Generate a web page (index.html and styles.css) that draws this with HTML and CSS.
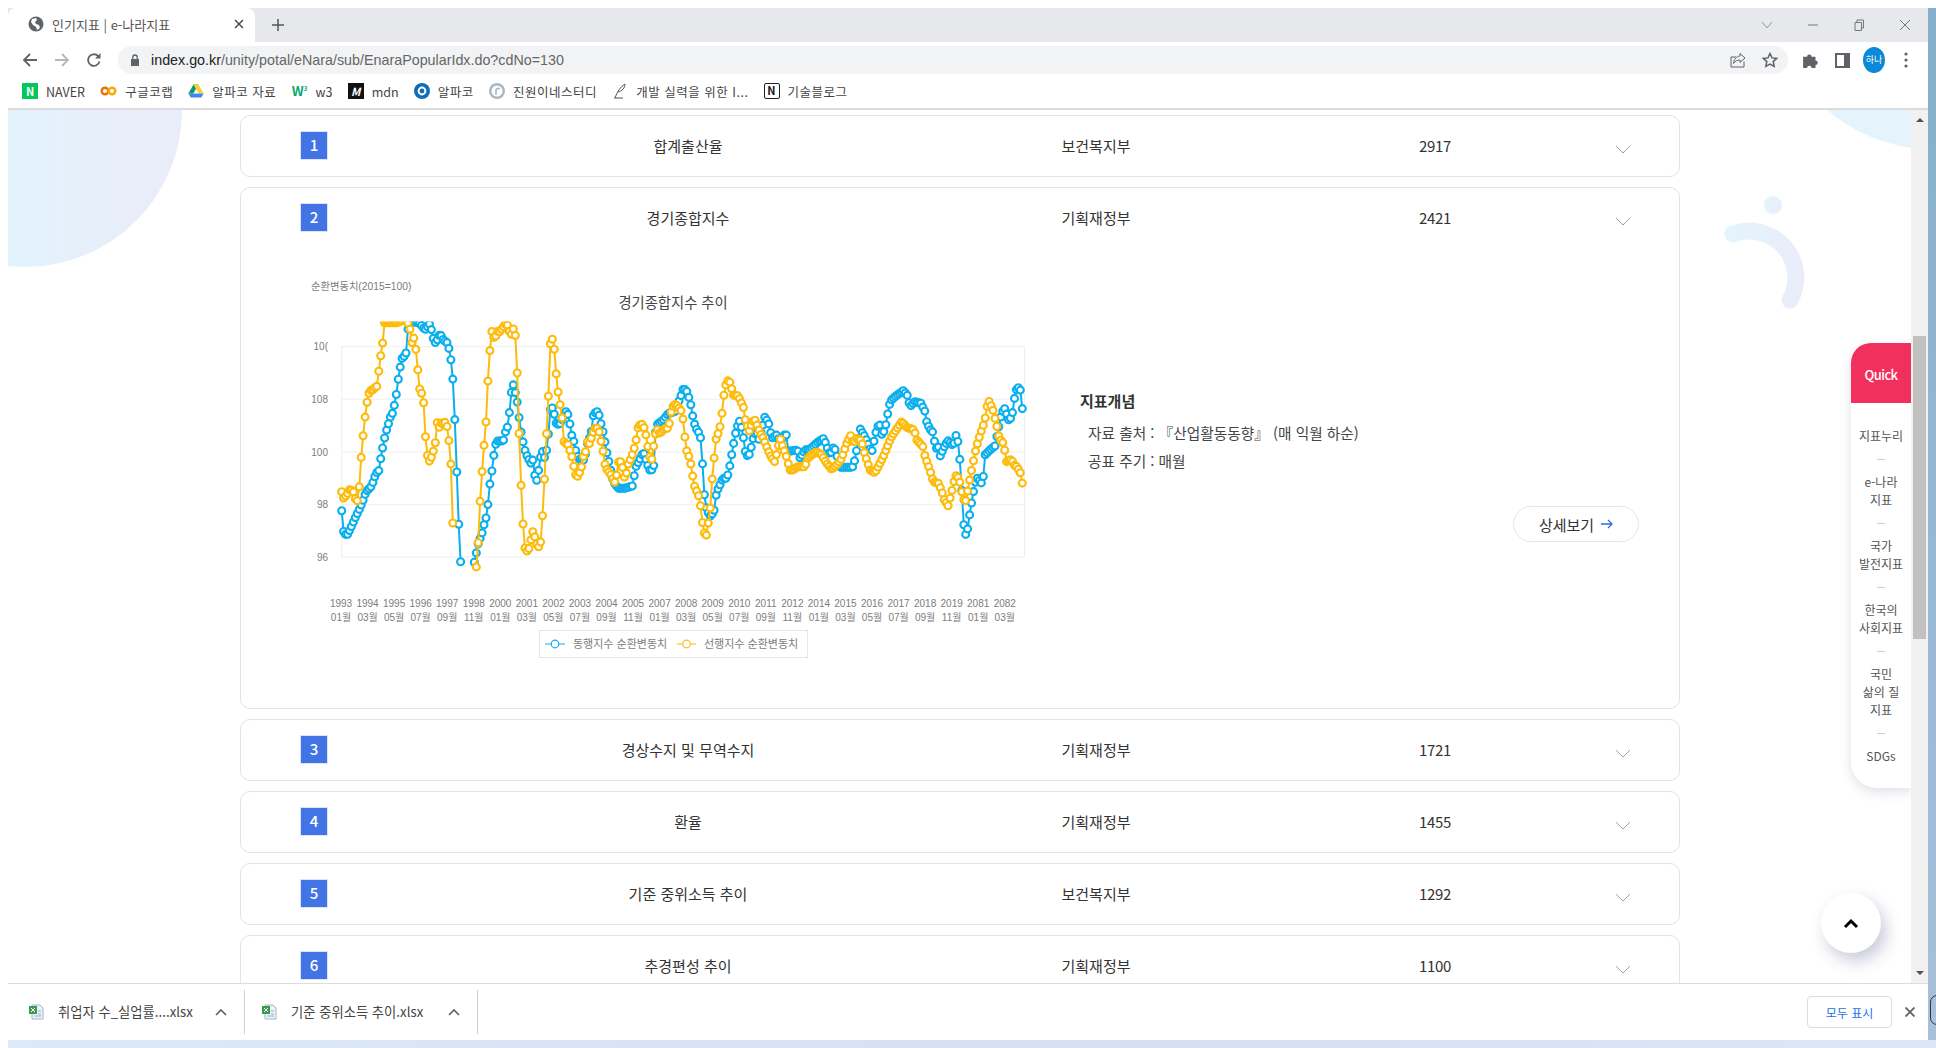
FILE: index.html
```html
<!DOCTYPE html>
<html lang="ko">
<head>
<meta charset="UTF-8">
<meta name="viewport" content="width=device-width, initial-scale=1.0">
<title>인기지표 | e-나라지표</title>
<link rel="stylesheet" href="styles.css">
</head>
<body>
<div class="desk-icon"></div>
<div class="window">
    <div class="tabstrip">
        <div class="tab">
            <svg class="tab-fav" width="16" height="16" viewBox="0 0 16 16"><circle cx="8" cy="8" r="7.5" fill="#5f6368"/><path d="M4 3l4-1 1 2-2 2 1 2 3 1 1 3-3 2-1-3-3-2-2-3z" fill="#fff"/></svg>
            <span class="tab-title">인기지표 | e-나라지표</span>
            <svg class="tab-close" width="10" height="10" viewBox="0 0 10 10"><path d="M1 1l8 8M9 1l-8 8" stroke="#444" stroke-width="1.4"/></svg>
        </div>
        <svg class="tab-plus" width="12" height="12" viewBox="0 0 12 12"><path d="M6 0v12M0 6h12" stroke="#555" stroke-width="1.5"/></svg>
        <div class="win-controls">
            <svg width="14" height="14" viewBox="0 0 14 14"><path d="M2 4l5 6 5-6" fill="none" stroke="#999"/></svg>
            <svg width="14" height="14" viewBox="0 0 14 14"><path d="M2 7h10" stroke="#777"/></svg>
            <svg width="14" height="14" viewBox="0 0 14 14"><path d="M3 4.5h6.5v8H3zM5 4.5V2h6.500v8H9.500" fill="none" stroke="#777"/></svg>
            <svg width="14" height="14" viewBox="0 0 14 14"><path d="M2 2l10 10M12 2L2 12" stroke="#777"/></svg>
        </div>
    </div>

    <div class="toolbar">
        <svg class="nav-icon" width="16" height="16" viewBox="0 0 16 16"><path d="M15 8H2M8 2L2 8l6 6" fill="none" stroke="#5f6368" stroke-width="1.800"/></svg>
        <svg class="nav-icon" width="16" height="16" viewBox="0 0 16 16"><path d="M1 8h13M8 2l6 6-6 6" fill="none" stroke="#b4b7bb" stroke-width="1.800"/></svg>
        <svg class="nav-icon" width="16" height="16" viewBox="0 0 16 16"><path d="M13.500 9.500A5.800 5.800 0 1 1 12 4" fill="none" stroke="#5f6368" stroke-width="1.800"/><path d="M14.500 1v5.500H9z" fill="#5f6368"/></svg>
        <div class="address">
            <svg class="lock" width="10" height="12" viewBox="0 0 10 12"><path d="M1 5h8v7H1z" fill="#5f6368"/><path d="M2.800 5V3.200a2.200 2.200 0 0 1 4.400 0V5" fill="none" stroke="#5f6368" stroke-width="1.300"/></svg>
            <span class="url"><b>index.go.kr</b>/unity/potal/eNara/sub/EnaraPopularIdx.do?cdNo=130</span>
            <svg class="addr-share" width="16" height="16" viewBox="0 0 16 16"><path d="M14 9.500V15H1V5h5" fill="none" stroke="#5f6368"/><path d="M10 1.500L15 6l-5 4.500V8C7 8 5 9 3.500 11.500 4 7 6.500 4.500 10 4z" fill="none" stroke="#5f6368"/></svg>
            <svg class="addr-star" width="16" height="16" viewBox="0 0 16 16"><path d="M8 1.500l2 4.400 4.800.5-3.600 3.200 1 4.700L8 12l-4.200 2.300 1-4.700L1.200 6.400 6 5.900z" fill="none" stroke="#5f6368" stroke-width="1.500"/></svg>
        </div>
        <svg class="ext-icon" width="18" height="18" viewBox="0 0 16 16"><path d="M1 5h3.500a2 2 0 1 1 4 0H12v3.500a2 2 0 1 1 0 4V15H8.500a2 2 0 1 0-4 0H1z" fill="#5f6368"/></svg>
        <svg class="panel-icon" width="15" height="15" viewBox="0 0 15 15"><rect width="15" height="15" fill="#5f6368"/><rect x="2" y="2" width="7" height="11" fill="#fff"/></svg>
        <div class="avatar">하나</div>
        <svg class="dots" width="4" height="16" viewBox="0 0 4 16"><circle cx="2" cy="2" r="1.600" fill="#5f6368"/><circle cx="2" cy="8" r="1.600" fill="#5f6368"/><circle cx="2" cy="14" r="1.600" fill="#5f6368"/></svg>
    </div>

    <div class="bookmarks">
        <div class="bm bm-en"><span class="bm-naver">N</span>NAVER</div>
        <div class="bm"><svg width="17" height="16" viewBox="0 0 17 16"><circle cx="5" cy="8" r="3.300" fill="none" stroke="#e8710a" stroke-width="2.400"/><circle cx="12" cy="8" r="3.300" fill="none" stroke="#f9ab00" stroke-width="2.400"/></svg>구글코랩</div>
        <div class="bm"><svg width="16" height="16" viewBox="0 0 16 16"><path d="M5.500 1.500h5L5.300 10.500H.3z" fill="#0f9d58"/><path d="M10.500 1.500l5.200 9h-5L5.500 1.500z" fill="#ffcd40"/><path d="M.3 10.500h15.400l-2.500 4H2.800z" fill="#4285f4"/></svg>알파코 자료</div>
        <div class="bm bm-en"><span class="bm-w3">W<sup>3</sup></span>w3</div>
        <div class="bm bm-en"><span class="bm-mdn">M</span>mdn</div>
        <div class="bm"><svg width="16" height="16" viewBox="0 0 16 16"><circle cx="8" cy="8" r="8" fill="#0f6db5"/><circle cx="8" cy="8" r="3.400" fill="none" stroke="#fff" stroke-width="2"/></svg>알파코</div>
        <div class="bm"><svg width="16" height="16" viewBox="0 0 16 16"><circle cx="8" cy="8" r="8" fill="#a9b7c4"/><circle cx="8" cy="8" r="5.500" fill="#fff"/><path d="M7 12V7.500A2 2 0 0 1 9 5.500h2" fill="none" stroke="#a9b7c4" stroke-width="1.600"/></svg>진원이네스터디</div>
        <div class="bm"><svg width="16" height="16" viewBox="0 0 16 16"><path d="M13 1C8 4 5 9 3 15M13 1c0 4-3 7-7 8M2 15h9" fill="none" stroke="#555"/></svg>개발 실력을 위한 I...</div>
        <div class="bm"><span class="bm-notion">N</span>기술블로그</div>
    </div>

    <div class="viewport">
        <div class="page">
            <div class="deco-left"></div>
            <div class="deco-right"></div>
            <svg class="deco-swirl" width="120" height="130" viewBox="1708 190 120 130">
                <defs>
                    <linearGradient id="swirl-grad" x1="0" y1="0" x2="1" y2="0">
                        <stop offset="0" stop-color="#e3f4fc"/>
                        <stop offset="1" stop-color="#e9edf9"/>
                    </linearGradient>
                </defs>
                <circle cx="1773" cy="205" r="9" fill="url(#swirl-grad)"/>
                <path d="M1733 234A46.500 46.500 0 0 1 1790 300" fill="none" stroke="url(#swirl-grad)" stroke-width="17" stroke-linecap="round"/>
            </svg>

            <div class="list">
                <div class="card">
                    <div class="row">
                        <span class="rank">1</span><span class="name">합계출산율</span><span class="dept">보건복지부</span><span class="count">2917</span>
                        <svg class="chev" width="16" height="9" viewBox="0 0 16 9"><path d="M1 1l7 7 7-7" fill="none" stroke="#a0a0a0"/></svg>
                    </div>
                </div>
                <div class="card">
                    <div class="row">
                        <span class="rank">2</span><span class="name">경기종합지수</span><span class="dept">기획재정부</span><span class="count">2421</span>
                        <svg class="chev" width="16" height="9" viewBox="0 0 16 9"><path d="M1 1l7 7 7-7" fill="none" stroke="#a0a0a0"/></svg>
                    </div>
                    <div class="detail">
                        <svg id="trend-chart" class="chart" width="740" height="400" viewBox="300 270 740 400"></svg>
                        <div class="concept">
                            <h3>지표개념</h3>
                            <p>자료 출처 : 『산업활동동향』 (매 익월 하순)</p>
                            <p>공표 주기 : 매월</p>
                            <a class="more">상세보기 <svg width="12" height="10" viewBox="0 0 12 10"><path d="M0 5h11M7 1l4 4-4 4" fill="none" stroke="#2f6fd8" stroke-width="1.300"/></svg></a>
                        </div>
                    </div>
                </div>
                <div class="card">
                    <div class="row">
                        <span class="rank">3</span><span class="name">경상수지 및 무역수지</span><span class="dept">기획재정부</span><span class="count">1721</span>
                        <svg class="chev" width="16" height="9" viewBox="0 0 16 9"><path d="M1 1l7 7 7-7" fill="none" stroke="#a0a0a0"/></svg>
                    </div>
                </div>
                <div class="card">
                    <div class="row">
                        <span class="rank">4</span><span class="name">환율</span><span class="dept">기획재정부</span><span class="count">1455</span>
                        <svg class="chev" width="16" height="9" viewBox="0 0 16 9"><path d="M1 1l7 7 7-7" fill="none" stroke="#a0a0a0"/></svg>
                    </div>
                </div>
                <div class="card">
                    <div class="row">
                        <span class="rank">5</span><span class="name">기준 중위소득 추이</span><span class="dept">보건복지부</span><span class="count">1292</span>
                        <svg class="chev" width="16" height="9" viewBox="0 0 16 9"><path d="M1 1l7 7 7-7" fill="none" stroke="#a0a0a0"/></svg>
                    </div>
                </div>
                <div class="card">
                    <div class="row">
                        <span class="rank">6</span><span class="name">추경편성 추이</span><span class="dept">기획재정부</span><span class="count">1100</span>
                        <svg class="chev" width="16" height="9" viewBox="0 0 16 9"><path d="M1 1l7 7 7-7" fill="none" stroke="#a0a0a0"/></svg>
                    </div>
                </div>
            </div>

            <div class="quick">
                <div class="quick-head">Quick</div>
                <ul class="quick-list">
                    <li>지표누리</li>
                    <li>e-나라<br>지표</li>
                    <li>국가<br>발전지표</li>
                    <li>한국의<br>사회지표</li>
                    <li>국민<br>삶의 질<br>지표</li>
                    <li>SDGs</li>
                </ul>
            </div>
            <div class="to-top"><svg width="16" height="11" viewBox="0 0 16 11"><path d="M2 9l6-6 6 6" fill="none" stroke="#000" stroke-width="3"/></svg></div>
        </div>
        <div class="scrollbar">
            <span class="arrow-up"></span>
            <span class="thumb"></span>
            <span class="arrow-down"></span>
        </div>
    </div>

    <div class="downloads">
        <div class="dl-item">
            <svg width="15" height="16" viewBox="0 0 15 16"><path d="M3 1h8l3 3v11H3z" fill="#eef3f9" stroke="#9fb4cc"/><rect x="0" y="2" width="8" height="8" fill="#3c9a4b"/><path d="M2 4l4 4M6 4L2 8" stroke="#fff"/><path d="M9 7h3M9 10h3M5 12h7" stroke="#8fb0d0"/></svg>
            <span class="dl-name">취업자 수_실업률....xlsx</span>
            <svg class="dl-caret" width="12" height="8" viewBox="0 0 12 8"><path d="M1 7l5-5 5 5" fill="none" stroke="#5f6368" stroke-width="1.700"/></svg>
        </div>
        <div class="dl-item">
            <svg width="15" height="16" viewBox="0 0 15 16"><path d="M3 1h8l3 3v11H3z" fill="#eef3f9" stroke="#9fb4cc"/><rect x="0" y="2" width="8" height="8" fill="#3c9a4b"/><path d="M2 4l4 4M6 4L2 8" stroke="#fff"/><path d="M9 7h3M9 10h3M5 12h7" stroke="#8fb0d0"/></svg>
            <span class="dl-name">기준 중위소득 추이.xlsx</span>
            <svg class="dl-caret" width="12" height="8" viewBox="0 0 12 8"><path d="M1 7l5-5 5 5" fill="none" stroke="#5f6368" stroke-width="1.700"/></svg>
        </div>
        <button class="show-all">모두 표시</button>
        <svg class="dl-close" width="10" height="10" viewBox="0 0 10 10"><path d="M0.500 0.500l9 9M9.500 0.500l-9 9" stroke="#5f6368" stroke-width="1.800"/></svg>
    </div>
</div>
<script src="chart.js"></script>
</body>
</html>
```

FILE: styles.css
```css
* {
    box-sizing: border-box;
}

html, body {
    margin: 0;
    padding: 0;
    height: 100%;
    overflow: hidden;
}

body {
    position: relative;
    padding: 8px 0 0 8px;
    background: #fff;
    font-family: "Noto Sans CJK KR", "Noto Sans", sans-serif;
    color: #333;
}

/* desktop wallpaper seen around the window */
body::before {
    content: "";
    position: absolute;
    right: 0;
    top: 8px;
    bottom: 8px;
    width: 8px;
    background: linear-gradient(#84aecb, #a9c0da);
}

body::after {
    content: "";
    position: absolute;
    left: 8px;
    right: 0;
    bottom: 0;
    height: 8px;
    background: linear-gradient(90deg, #dce9f7, #d5e0f4 60%, #dbe7f6);
}

.desk-icon {
    position: absolute;
    z-index: 1;
    left: 1930px;
    top: 995px;
    width: 16px;
    height: 30px;
    border: 1.5px solid #333;
    border-radius: 7px;
}

.window {
    display: flex;
    flex-direction: column;
    width: 1920px;
    height: 1032px;
    background: #fff;
}

.tabstrip {
    display: flex;
    align-items: center;
    flex: 0 0 34px;
    background: #e7e8ec;
}

.tab {
    display: flex;
    align-items: center;
    align-self: stretch;
    width: 247px;
    padding: 0 11px 2px 20px;
    background: #fff;
    border-radius: 8px 8px 0 0;
}

.tab-title {
    flex: 1;
    margin-left: 8px;
    font-size: 13px;
    color: #555;
}

.tab-plus {
    margin-left: 17px;
}

.win-controls {
    display: flex;
    gap: 32px;
    margin-left: auto;
    margin-right: 16px;
}

.toolbar {
    display: flex;
    align-items: center;
    flex: 0 0 32px;
    padding: 4px 0 0 14px;
}

.nav-icon {
    margin-right: 16px;
}

.address {
    display: flex;
    align-items: center;
    width: 1670px;
    height: 28px;
    padding: 0 10px 0 12px;
    background: #f1f3f4;
    border-radius: 14px;
}

.url {
    margin-left: 11px;
    font-family: "Liberation Sans", sans-serif;
    font-size: 14.300px;
    color: #666;
}

.url b {
    font-weight: normal;
    color: #222;
}

.addr-share {
    margin-left: auto;
}

.addr-star {
    margin-left: 16px;
}

.ext-icon {
    margin-left: 14px;
}

.panel-icon {
    margin-left: 15px;
}

.avatar {
    width: 22px;
    height: 26px;
    margin-left: 13px;
    border-radius: 50%;
    background: #0a8ad6;
    color: #fff;
    font-size: 9px;
    line-height: 26px;
    text-align: center;
}

.dots {
    margin-left: 19px;
}

.bookmarks {
    display: flex;
    align-items: center;
    gap: 15.200px;
    flex: 0 0 36px;
    padding-left: 14px;
    border-bottom: 2px solid #dcdcdc;
    font-size: 12.500px;
    letter-spacing: 0.5px;
    color: #444;
}

.bm {
    display: flex;
    align-items: center;
    gap: 8px;
    white-space: nowrap;
}

.bm-en {
    letter-spacing: 0;
}

.bm-naver, .bm-mdn, .bm-notion, .bm-w3 {
    display: block;
    width: 16px;
    height: 16px;
    font-size: 11px;
    font-weight: bold;
    line-height: 16px;
    text-align: center;
}

.bm-naver {
    background: #03c75a;
    color: #fff;
}

.bm-w3 {
    color: #04aa6d;
    font-size: 13px;
}

.bm-w3 sup {
    font-size: 6px;
    line-height: 0;
}

.bm-mdn {
    background: #111;
    color: #fff;
    font-style: italic;
}

.bm-notion {
    border: 1.500px solid #222;
    border-radius: 2px;
    color: #111;
    line-height: 13px;
}

.viewport {
    display: flex;
    flex: 1;
    min-height: 0;
}

.page {
    position: relative;
    flex: 1;
    overflow: hidden;
}

.deco-left {
    position: absolute;
    left: -140px;
    top: -157px;
    width: 314px;
    height: 314px;
    border-radius: 50%;
    background: linear-gradient(90deg, #e2f3fd 46%, #e9edf9 85%);
}

.deco-right {
    position: absolute;
    left: 1766px;
    top: -275px;
    width: 314px;
    height: 314px;
    border-radius: 50%;
    background: #e4f3fc;
}

.deco-swirl {
    position: absolute;
    left: 1700px;
    top: 80px;
}

.list {
    position: relative;
    display: flex;
    flex-direction: column;
    gap: 10px;
    width: 1440px;
    margin: 5px 0 0 232px;
}

.card {
    flex: none;
    border: 1px solid #e4e4e4;
    border-radius: 10px;
    background: #fff;
}

.row {
    display: flex;
    align-items: center;
    height: 60px;
    padding: 0 0 2px 59px;
    font-size: 15px;
    color: #333;
}

.rank {
    flex: none;
    width: 28px;
    height: 29px;
    background: #4374e6;
    border: 1px solid #dbe5fa;
    color: #fff;
    font-weight: 500;
    line-height: 26px;
    text-align: center;
}

.name {
    width: 720px;
    text-align: center;
}

.dept {
    width: 96px;
    text-align: center;
}

.count {
    width: 100px;
    margin-left: 241px;
    letter-spacing: -0.3px;
    text-align: center;
}

.chev {
    margin-left: 130px;
    margin-top: 9px;
}

.detail {
    display: flex;
    padding: 22px 40px 38px 59px;
}

.chart {
    flex: none;
}

.chart text {
    font-family: "Liberation Sans", "Noto Sans CJK KR", sans-serif;
    font-size: 10px;
    fill: #7c7c7c;
}

.chart .chart-unit {
    font-size: 10.300px;
}

.chart .chart-title {
    font-family: "Noto Sans CJK KR", sans-serif;
    font-size: 14.300px;
    fill: #444;
}

.chart .legend-text {
    font-size: 11px;
}

.concept {
    flex: 1;
    display: flex;
    flex-direction: column;
    margin: 119px 0 0 40px;
    font-size: 14.700px;
}

.concept h3 {
    margin: 0 0 9px;
    font-size: 15px;
    line-height: 24px;
    font-weight: bold;
}

.concept p {
    margin: 0 0 6px 8px;
    line-height: 22px;
    color: #444;
}

.more {
    display: flex;
    align-items: center;
    justify-content: center;
    gap: 7px;
    align-self: flex-end;
    width: 126px;
    height: 36px;
    margin-top: 28px;
    border: 1px solid #e6e6e6;
    border-radius: 18px;
    font-size: 15px;
}

.quick {
    position: absolute;
    top: 233px;
    right: 0;
    width: 60px;
    border-radius: 20px 0 0 26px;
    background: #fff;
    box-shadow: 0 4px 12px rgba(60, 70, 110, 0.16);
}

.quick-head {
    height: 60px;
    border-radius: 20px 0 0 0;
    background: #f2305e;
    color: #fff;
    font-size: 13px;
    font-weight: 500;
    letter-spacing: -0.6px;
    line-height: 64px;
    text-align: center;
}

.quick-list {
    margin: 0;
    padding: 24px 0 23px;
    list-style: none;
    font-size: 12px;
    line-height: 18px;
    color: #555;
    text-align: center;
}

.quick-list li + li::before {
    content: "";
    display: block;
    width: 8px;
    height: 1px;
    margin: 14px auto 13px;
    background: #cfcfcf;
}

.to-top {
    position: absolute;
    left: 1813px;
    top: 783px;
    display: flex;
    align-items: center;
    justify-content: center;
    width: 60px;
    height: 60px;
    border-radius: 50%;
    background: #fff;
    box-shadow: 5px 8px 16px rgba(60, 70, 120, 0.28);
}

.scrollbar {
    display: flex;
    flex-direction: column;
    align-items: center;
    flex: 0 0 17px;
    background: #f1f1f1;
}

.arrow-up {
    margin-top: 8px;
    border: 4px solid transparent;
    border-top: 0;
    border-bottom: 4px solid #505050;
}

.thumb {
    width: 13px;
    height: 303px;
    margin-top: 214px;
    background: #c1c1c1;
}

.arrow-down {
    margin-top: auto;
    margin-bottom: 8px;
    border: 4px solid transparent;
    border-bottom: 0;
    border-top: 4px solid #505050;
}

.downloads {
    display: flex;
    align-items: center;
    flex: 0 0 57px;
    border-top: 1px solid #dcdcdc;
    font-size: 13.300px;
    color: #444;
}

.dl-item {
    display: flex;
    align-items: center;
    width: 233px;
    height: 44px;
    padding-left: 17px;
    border-right: 1px solid #cfcfcf;
}

.dl-item:first-child {
    width: 237px;
    padding-left: 21px;
}

.dl-name {
    margin-left: 14px;
    padding-bottom: 2px;
    white-space: nowrap;
}

.dl-caret {
    margin-left: auto;
    margin-right: 17px;
}

.show-all {
    width: 85px;
    height: 32px;
    margin-left: auto;
    background: #fff;
    border: 1px solid #dadce0;
    border-radius: 4px;
    font-family: inherit;
    font-size: 12px;
    color: #1a73e8;
}

.dl-close {
    margin: 0 13px;
}
```

FILE: chart.js
```js
// coordinates read off the chart, in zoomed px, then moved to page px
function fromA(list) {
    return list.map(function (p) { return [p[0] / 3 + 290, p[1] / 3 + 260]; });
}
function fromB(list) {
    return list.map(function (p) { return [p[0] / 3 + 640, p[1] / 3 + 340]; });
}

var blueA = fromA([[155,750],[158,810],[170,828],[182,805],[195,775],[207,750],[218,725],[228,695],[245,678],[258,640],[268,630],[272,597],[279,558],[285,528],[291,505],[297,487],[303,465],[310,457],[315,423],[321,393],[323,369],[329,330],[335,297],[341,290],[348,282],[350,242],[356,190],[370,185],[390,190],[405,210],[420,190],[430,235],[437,250],[450,220],[460,240],[474,250],[480,282],[486,320],[491,393],[496,519],[502,684],[508,843],[514,938]]);
var blueB = fromA([[548,930],[558,882],[565,850],[576,820],[582,795],[588,774],[595,726],[600,669],[606,630],[608,590],[615,582],[618,543],[640,543],[645,519],[652,504],[657,465],[661,441],[666,369],[672,378],[680,420],[685,440],[688,480],[695,528],[702,558],[708,585],[715,590],[720,615],[728,597],[734,645],[741,663],[750,605],[755,567],[765,597],[770,567],[775,527],[778,455],[785,440],[792,455],[795,487],[808,495],[828,455],[835,465],[838,480],[843,519],[851,543],[860,585],[870,600],[885,600],[888,560],[900,530],[905,510],[910,465],[918,455],[925,455],[932,487],[937,505],[943,535],[950,575],[960,620],[970,665],[985,685],[1005,685],[1027,678],[1033,645],[1038,620],[1050,597],[1060,575],[1078,630],[1085,630],[1092,615],[1095,530],[1100,495],[1120,480],[1135,460],[1155,455],[1172,410],[1180,385],[1190,393],[1198,417],[1204,441],[1210,480],[1218,505],[1228,520],[1234,543],[1237,606],[1243,703],[1250,750],[1262,770],[1273,750],[1279,700],[1285,685],[1292,670],[1298,655],[1311,655],[1317,630],[1323,597],[1328,567],[1334,533],[1340,505],[1350,480],[1355,505],[1362,543],[1367,582],[1375,590],[1381,575],[1388,540],[1400,510],[1405,545],[1415,510]]).concat(fromB([[375,230],[388,255],[395,295],[410,285],[420,305],[438,278],[445,335],[465,330],[478,335],[480,355],[495,330],[510,328],[535,305],[552,295],[560,320],[570,345],[582,318],[590,345],[600,382],[630,382],[640,380],[648,342],[660,265],[668,280],[675,290],[695,338],[705,290],[712,260],[720,255],[727,290],[740,245],[745,208],[752,182],[768,168],[790,152],[803,168],[810,200],[825,185],[843,190],[855,215],[860,245],[870,268],[882,280],[885,328],[895,320],[900,350],[915,315],[925,302],[940,318],[950,278],[958,335],[965,440],[968,525],[975,588],[982,572],[985,555],[990,515],[995,487],[1003,440],[1010,412],[1025,430],[1032,400],[1035,345],[1045,335],[1055,325],[1065,318],[1085,218],[1095,205],[1105,240],[1115,232],[1122,192],[1125,155],[1133,143],[1140,143],[1146,192],[1150,265]]));

var yellowA = fromA([[155,695],[160,715],[170,705],[180,687],[190,695],[200,730],[207,702],[209,645],[215,576],[221,510],[228,447],[234,408],[240,392],[248,390],[258,380],[265,378],[266,336],[272,288],[278,249],[282,188],[320,188],[350,178],[360,208],[366,250],[372,233],[378,272],[381,297],[387,384],[393,393],[400,417],[405,486],[408,567],[417,606],[425,590],[432,567],[437,543],[441,486],[447,503],[455,486],[462,495],[468,480],[474,519],[480,567],[486,668],[491,905]]);
var yellowB = fromA([[558,930],[565,843],[570,731],[576,639],[582,558],[588,486],[594,360],[600,267],[604,210],[615,243],[620,210],[627,218],[650,188],[660,220],[667,225],[673,188],[678,258],[684,393],[690,615],[696,726],[702,852],[708,876],[714,870],[720,860],[725,820],[730,813],[736,838],[742,860],[748,860],[754,838],[759,741],[765,630],[771,480],[777,378],[779,258],[786,234],[792,258],[798,336],[804,393],[810,432],[816,471],[820,543],[826,550],[836,555],[842,582],[848,597],[853,630],[860,654],[873,630],[880,590],[886,582],[888,543],[900,552],[906,525],[915,505],[925,505],[931,533],[936,558],[942,590],[946,622],[952,630],[960,640],[968,655],[975,668],[980,645],[986,605],[992,605],[1000,630],[1006,668],[1008,645],[1015,612],[1025,590],[1032,567],[1038,543],[1043,505],[1050,495],[1057,493],[1065,510],[1071,543],[1077,582],[1084,606],[1090,567],[1095,530],[1101,505],[1107,520],[1115,515],[1125,505],[1135,505],[1140,480],[1146,442],[1157,432],[1168,445],[1176,456],[1180,486],[1185,534],[1191,576],[1197,590],[1203,615],[1209,654],[1215,684],[1220,693],[1226,708],[1232,740],[1236,780],[1242,813],[1247,838],[1254,795],[1260,756],[1266,663],[1271,615],[1276,543],[1282,528],[1288,510],[1293,486],[1298,441],[1303,393],[1310,365],[1317,360],[1323,378],[1330,405],[1345,408],[1350,420],[1356,432],[1362,447],[1367,487],[1375,505],[1380,519],[1385,487],[1395,480],[1405,505],[1412,522],[1420,535]]).concat(fromB([[390,345],[404,365],[412,335],[420,293],[428,320],[436,340],[444,365],[447,390],[460,390],[472,380],[495,380],[503,355],[515,345],[530,335],[545,345],[560,370],[575,388],[590,375],[605,355],[620,310],[632,287],[640,310],[650,295],[665,302],[672,335],[680,360],[690,390],[705,398],[717,375],[730,350],[740,325],[752,295],[765,275],[785,245],[800,262],[823,270],[830,300],[848,318],[855,350],[866,380],[872,398],[880,425],[895,430],[905,452],[912,478],[925,498],[933,462],[940,438],[945,405],[957,415],[963,443],[968,468],[975,492],[980,468],[985,443],[990,413],[995,390],[1002,355],[1008,325],[1014,305],[1020,285],[1030,255],[1038,225],[1042,195],[1048,183],[1052,195],[1058,207],[1066,240],[1072,265],[1078,295],[1090,310],[1095,335],[1100,365],[1115,358],[1122,375],[1130,380],[1140,395],[1146,415],[1148,453]]));

// one sample per month, the chart has a fixed step on x
var STEP = 1.95;
var START = 341.7;

function sample(points) {
    var out = [];
    var first = Math.ceil((points[0][0] - START) / STEP);
    var last = Math.floor((points[points.length - 1][0] - START) / STEP);
    var j = 0;
    for (var i = first; i <= last; i++) {
        var x = START + i * STEP;
        while (j < points.length - 2 && points[j + 1][0] < x) j++;
        var a = points[j];
        var b = points[j + 1];
        var t = b[0] === a[0] ? 0 : (x - a[0]) / (b[0] - a[0]);
        out.push([x, a[1] + (b[1] - a[1]) * t]);
    }
    return out;
}

function drawSeries(segments, color) {
    var html = '';
    segments.forEach(function (seg) {
        var pts = sample(seg);
        var line = pts.map(function (p) { return p[0].toFixed(1) + ',' + p[1].toFixed(1); }).join(' ');
        html += '<polyline points="' + line + '" fill="none" stroke="' + color + '" stroke-width="2"/>';
        pts.forEach(function (p) {
            html += '<circle cx="' + p[0].toFixed(1) + '" cy="' + p[1].toFixed(1) + '" r="3.5" fill="#fff" stroke="' + color + '" stroke-width="2.1"/>';
        });
    });
    return html;
}

var labels = ['1993|01월','1994|03월','1995|05월','1996|07월','1997|09월','1998|11월','2000|01월','2001|03월','2002|05월','2003|07월','2004|09월','2005|11월','2007|01월','2008|03월','2009|05월','2010|07월','2011|09월','2012|11월','2014|01월','2015|03월','2016|05월','2017|07월','2018|09월','2019|11월','2081|01월','2082|03월'];

var svg = '';
svg += '<text class="chart-unit" x="311" y="290">순환변동치(2015=100)</text>';
svg += '<text class="chart-title" x="673" y="308" text-anchor="middle">경기종합지수 추이</text>';

// grid
[346.7, 399.2, 452, 504.7, 557].forEach(function (y) {
    svg += '<line x1="341.7" x2="1024.5" y1="' + y + '" y2="' + y + '" stroke="#efefef"/>';
});
svg += '<line x1="341.7" x2="341.7" y1="346.7" y2="557" stroke="#efefef"/>';
svg += '<line x1="1024.5" x2="1024.5" y1="346.7" y2="557" stroke="#efefef"/>';

// y axis, the first two are cut by the plot area in the original too
[['10(', 346.7], ['108', 399.2], ['100', 452], ['98', 504.7], ['96', 557]].forEach(function (t) {
    svg += '<text x="328" y="' + (t[1] + 3.5) + '" text-anchor="end">' + t[0] + '</text>';
});

labels.forEach(function (l, i) {
    var x = 341 + i * 26.55;
    var parts = l.split('|');
    svg += '<text x="' + x + '" y="607" text-anchor="middle">' + parts[0] + '</text>';
    svg += '<text x="' + x + '" y="621" text-anchor="middle">' + parts[1] + '</text>';
});

svg += '<defs><clipPath id="plot-clip"><rect x="337" y="321.5" width="693" height="260"/></clipPath></defs>';
svg += '<g clip-path="url(#plot-clip)">' + drawSeries([blueA, blueB], '#0bafee') + drawSeries([yellowA, yellowB], '#fdbb0c') + '</g>';

// legend
svg += '<rect x="539.5" y="630.5" width="268" height="27" fill="#fff" stroke="#e6e6e6"/>';
svg += '<line x1="545" x2="565" y1="644" y2="644" stroke="#0bafee"/><circle cx="555" cy="644" r="3.8" fill="#fff" stroke="#0bafee" stroke-width="1.2"/>';
svg += '<text class="legend-text" x="573" y="648">동행지수 순환변동치</text>';
svg += '<line x1="677" x2="696" y1="644" y2="644" stroke="#fdbb0c"/><circle cx="686.5" cy="644" r="3.8" fill="#fff" stroke="#fdbb0c" stroke-width="1.2"/>';
svg += '<text class="legend-text" x="704" y="648">선행지수 순환변동치</text>';

document.getElementById('trend-chart').innerHTML = svg;
```
